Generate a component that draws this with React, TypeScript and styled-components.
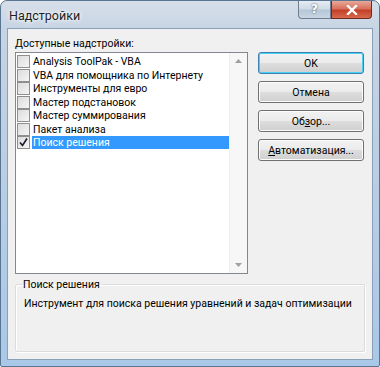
import styled, { createGlobalStyle } from 'styled-components'

const GlobalStyle = createGlobalStyle`
  html, body {
    margin: 0;
    padding: 0;
    background: #ffffff;
  }
  body {
    font-family: Roboto, "Liberation Sans", sans-serif;
    font-size: 10.5px;
    line-height: 13px;
    color: #000;
  }
`

const Frame = styled.div`
  width: 380px;
  height: 367px;
  box-sizing: border-box;
  display: flex;
  flex-direction: column;
  border: 1px solid #5a7592;
  border-radius: 7px 7px 2px 2px;
  background: linear-gradient(180deg, #d6dfe9 0%, #c6d4e3 8%, #bccfe3 40%, #a9c8e8 100%);
  padding: 0 6px 6px 6px;
  overflow: hidden;
`

const TitleBar = styled.div`
  height: 27px;
  display: flex;
  align-items: flex-start;
  justify-content: space-between;
  flex-shrink: 0;
`

const Title = styled.div`
  font-size: 12.5px;
  color: #1e1e1e;
  padding: 8px 0 0 2px;
  text-shadow: 0 0 6px #ffffff, 0 0 3px #ffffff;
`

const Caption = styled.div`
  display: flex;
  margin-right: 1px;
`

const CapButton = styled.div<{ $close?: boolean }>`
  height: 18px;
  width: ${p => (p.$close ? '41px' : '33px')};
  box-sizing: border-box;
  display: flex;
  align-items: center;
  justify-content: center;
  border: 1px solid ${p => (p.$close ? '#6b2a25' : '#6f7f90')};
  border-top: none;
  border-radius: ${p => (p.$close ? '0 0 4px 0' : '0 0 0 4px')};
  background: ${p =>
    p.$close
      ? 'linear-gradient(180deg, #e8a99a 0%, #d8705c 45%, #c3412b 55%, #d76a4c 100%)'
      : 'linear-gradient(180deg, #e6edf4 0%, #cfdbe7 45%, #b6c7d8 55%, #c9d6e3 100%)'};
  color: #fff;
  font-family: "DejaVu Sans", sans-serif;
  font-weight: bold;
  font-size: 12px;
  text-shadow: 0 0 2px #333;
`

const Client = styled.div`
  flex: 1;
  box-sizing: border-box;
  background: #f0f0f0;
  border: 1px solid #8aa0b8;
  padding: 8px 7px 7px 7px;
  display: flex;
  flex-direction: column;
`

const Top = styled.div`
  display: flex;
  gap: 10px;
`

const LeftCol = styled.div`
  display: flex;
  flex-direction: column;
`

const Label = styled.div`
  height: 14px;
  line-height: 14px;
  margin-bottom: 1px;
`

const ListBox = styled.div`
  width: 233px;
  height: 222px;
  box-sizing: border-box;
  border: 1px solid #828790;
  background: #ffffff;
  display: flex;
`

const Items = styled.div`
  flex: 1;
  padding: 2px 0 0 1px;
  display: flex;
  flex-direction: column;
`

const Item = styled.div`
  height: 13.5px;
  display: flex;
  align-items: center;
  gap: 2px;
`

const Check = styled.div`
  width: 13px;
  height: 13px;
  box-sizing: border-box;
  border: 1px solid #8f8f8f;
  background: linear-gradient(135deg, #dcdcdc 0%, #f5f5f5 100%);
  display: flex;
  align-items: center;
  justify-content: center;
  flex-shrink: 0;
`

const ItemText = styled.div<{ $selected?: boolean }>`
  flex: 1;
  height: 13px;
  line-height: 13px;
  padding-left: 1px;
  white-space: nowrap;
  background: ${p => (p.$selected ? '#3399ff' : 'transparent')};
  color: ${p => (p.$selected ? '#ffffff' : '#000000')};
`

const ScrollBar = styled.div`
  width: 17px;
  background: #f7f7f7;
  border-left: 1px solid #f0f0f0;
  display: flex;
  flex-direction: column;
  justify-content: space-between;
  align-items: center;
  padding: 6px 0 6px 0;
`

const Buttons = styled.div`
  display: flex;
  flex-direction: column;
  gap: 7px;
  padding-top: 15px;
`

const Button = styled.div<{ $default?: boolean }>`
  width: 106px;
  height: 22px;
  box-sizing: border-box;
  border: 1px solid ${p => (p.$default ? '#3c7fb1' : '#707070')};
  border-radius: 3px;
  background: linear-gradient(180deg, #f2f2f2 0%, #ebebeb 48%, #dddddd 52%, #cfcfcf 100%);
  box-shadow: inset 0 0 0 1px ${p => (p.$default ? '#48d0f5' : '#fcfcfc')};
  display: flex;
  align-items: center;
  justify-content: center;
  u {
    text-decoration: underline;
  }
`

const Group = styled.fieldset`
  margin: 4px 0 0 0;
  padding: 6px 8px 0 8px;
  flex: 1;
  border: 1px solid #dcdcdc;
  box-shadow: inset 1px 1px 0 #ffffff, 1px 1px 0 #ffffff;
  border-radius: 2px;
  white-space: nowrap;
  legend {
    padding: 0 1px;
    margin-left: -2px;
  }
`

const items = [
  'Analysis ToolPak - VBA',
  'VBA для помощника по Интернету',
  'Инструменты для евро',
  'Мастер подстановок',
  'Мастер суммирования',
  'Пакет анализа',
  'Поиск решения',
]

export default function App() {
  return (
    <>
      <GlobalStyle />
      <Frame>
        <TitleBar>
          <Title>Надстройки</Title>
          <Caption>
            <CapButton>?</CapButton>
            <CapButton $close>
              <svg width="12" height="10" viewBox="0 0 12 10">
                <path d="M2 1 L10 9 M10 1 L2 9" stroke="#ffffff" strokeWidth="2.4" strokeLinecap="square" />
              </svg>
            </CapButton>
          </Caption>
        </TitleBar>
        <Client>
          <Top>
            <LeftCol>
              <Label>Доступные надстройки:</Label>
              <ListBox>
                <Items>
                  {items.map((t, i) => (
                    <Item key={t}>
                      <Check>
                        {i === 6 && (
                          <svg width="11" height="11" viewBox="0 0 11 11">
                            <path d="M2 5.5 L4.5 8.5 L9 1.5" stroke="#1a1a2a" strokeWidth="1.6" fill="none" />
                          </svg>
                        )}
                      </Check>
                      <ItemText $selected={i === 6}>{t}</ItemText>
                    </Item>
                  ))}
                </Items>
                <ScrollBar>
                  <svg width="7" height="4" viewBox="0 0 7 4">
                    <path d="M0 4 L3.5 0 L7 4 Z" fill="#a0a0a0" />
                  </svg>
                  <svg width="7" height="4" viewBox="0 0 7 4">
                    <path d="M0 0 L3.5 4 L7 0 Z" fill="#a0a0a0" />
                  </svg>
                </ScrollBar>
              </ListBox>
            </LeftCol>
            <Buttons>
              <Button $default>OK</Button>
              <Button>Отмена</Button>
              <Button>Об<u>з</u>ор...</Button>
              <Button><u>А</u>втоматизация...</Button>
            </Buttons>
          </Top>
          <Group>
            <legend>Поиск решения</legend>
            Инструмент для поиска решения уравнений и задач оптимизации
          </Group>
        </Client>
      </Frame>
    </>
  )
}
